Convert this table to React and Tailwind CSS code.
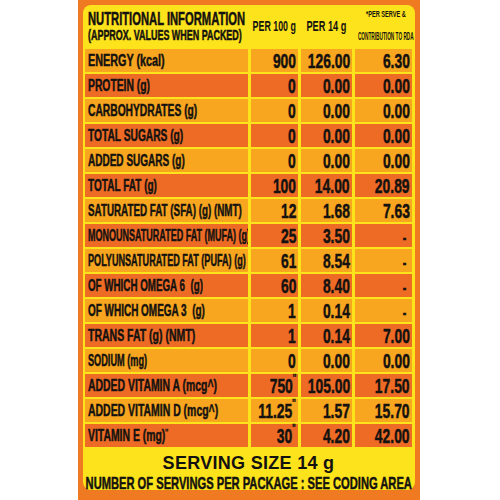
import React, { useLayoutEffect, useRef, useState } from 'react';

// w = width the text takes in the reference (label cells start at x=88)
const rows = [
    { label: 'ENERGY (kcal)', w: 77, a: '900', b: '126.00', c: '6.30' },
    { label: 'PROTEIN (g)', w: 62, a: '0', b: '0.00', c: '0.00' },
    { label: 'CARBOHYDRATES (g)', w: 109, a: '0', b: '0.00', c: '0.00' },
    { label: 'TOTAL SUGARS (g)', w: 95, a: '0', b: '0.00', c: '0.00' },
    { label: 'ADDED SUGARS (g)', w: 97, a: '0', b: '0.00', c: '0.00' },
    { label: 'TOTAL FAT (g)', w: 69, a: '100', b: '14.00', c: '20.89' },
    { label: 'SATURATED FAT (SFA) (g) (NMT)', w: 154, a: '12', b: '1.68', c: '7.63' },
    { label: 'MONOUNSATURATED FAT (MUFA) (g)', w: 162, a: '25', b: '3.50', c: '-' },
    { label: 'POLYUNSATURATED FAT (PUFA) (g)', w: 158, a: '61', b: '8.54', c: '-' },
    { label: 'OF WHICH OMEGA 6  (g)', w: 115, a: '60', b: '8.40', c: '-' },
    { label: 'OF WHICH OMEGA 3  (g)', w: 117, a: '1', b: '0.14', c: '-' },
    { label: 'TRANS FAT (g) (NMT)', w: 107, a: '1', b: '0.14', c: '7.00' },
    { label: 'SODIUM (mg)', w: 59, a: '0', b: '0.00', c: '0.00' },
    { label: 'ADDED VITAMIN A (mcg^)', w: 129, a: '750', sup: true, b: '105.00', c: '17.50' },
    { label: 'ADDED VITAMIN D (mcg^)', w: 130, a: '11.25', sup: true, b: '1.57', c: '15.70' },
    { label: 'VITAMIN E (mg)', w: 80, labelSup: true, a: '30', sup: true, b: '4.20', c: '42.00' },
];

const font = "font-['Liberation_Sans',Arial,sans-serif] font-bold text-[#141210]";
const heavy = '[-webkit-text-stroke:0.5px_#141210]';

// squeeze a line of text to the width it has in the label
function Fit({ w, origin = 'left', className = '', children }) {
    const ref = useRef(null);
    const [s, setS] = useState(0.65);
    useLayoutEffect(() => {
        const n = ref.current.offsetWidth;
        if (n) setS(w / n);
    }, [w]);
    return (
        <span ref={ref} className={`inline-block shrink-0 whitespace-pre ${className}`} style={{ transform: `scaleX(${s})`, transformOrigin: origin }}>
            {children}
        </span>
    );
}

function Num({ value, sup, bg }) {
    return (
        <div className={`${bg} h-[23px] flex items-center justify-end pr-[2px]`}>
            <span className={`inline-block origin-right scale-x-[0.66] whitespace-nowrap text-[21px] leading-none ${heavy}`}>
                {value === '-' ? <span className="text-[16px] pr-[6px]">-</span> : value}
                {sup && <span className="text-[11px] align-top relative -top-[2px]">''</span>}
            </span>
        </div>
    );
}

export default function App() {
    return (
        <div className={`w-[500px] h-[500px] bg-white pl-[78px] ${font}`}>
            <div className="w-[342px] h-[500px] bg-[#ef7a22] px-[5px] pt-[5px] pb-[10px]">
                <div className="h-full bg-[#fde31b] rounded-[8px] pl-[2px] pr-[3px] flex flex-col">
                    <div className="grid grid-cols-[163px_47px_51px_57px] gap-x-[3px] gap-y-[2px]">
                        <div className={`h-[42px] flex flex-col justify-center items-start pl-[3px] ${heavy}`}>
                            <Fit w={157} className="text-[18px] leading-[18px]">NUTRITIONAL INFORMATION</Fit>
                            <Fit w={154} className="text-[14px] leading-[14px]">(APPROX. VALUES WHEN PACKED)</Fit>
                        </div>
                        <div className="h-[42px] flex items-center justify-center">
                            <Fit w={43} origin="center" className="text-[14px] leading-none">PER 100 g</Fit>
                        </div>
                        <div className="h-[42px] flex items-center justify-center">
                            <Fit w={40} origin="center" className="text-[14px] leading-none">PER 14 g</Fit>
                        </div>
                        <div className="h-[42px] flex flex-col items-center justify-center gap-[13px] pl-[4px] pb-[1px]">
                            <Fit w={40} origin="center" className="text-[9px] leading-none">*PER SERVE &amp;</Fit>
                            <Fit w={56} origin="center" className="text-[10px] leading-none">CONTRIBUTION TO RDA</Fit>
                        </div>

                        {rows.map((r, i) => {
                            const bg = i % 2 === 0 ? 'bg-[#f8a51f]' : 'bg-[#ee6b26]';
                            return (
                                <React.Fragment key={r.label}>
                                    <div className={`${bg} h-[23px] flex items-center pl-[3px] overflow-hidden ${heavy}`}>
                                        <Fit w={r.w} className="text-[16px] leading-none">
                                            {r.label}
                                            {r.labelSup && <span className="text-[9px] align-top">''</span>}
                                        </Fit>
                                    </div>
                                    <Num value={r.a} sup={r.sup} bg={bg} />
                                    <Num value={r.b} bg={bg} />
                                    <Num value={r.c} bg={bg} />
                                </React.Fragment>
                            );
                        })}
                    </div>
                    <div className="flex-1 flex flex-col items-center pt-[7px] gap-[4px]">
                        <span className="whitespace-nowrap text-[18px] leading-[18px] tracking-[0.3px]">SERVING SIZE 14 g</span>
                        <div className={`w-full flex justify-center ${heavy}`}>
                            <Fit w={326} origin="center" className="text-[17px] leading-[16px]">NUMBER OF SERVINGS PER PACKAGE : SEE CODING AREA</Fit>
                        </div>
                    </div>
                </div>
            </div>
        </div>
    );
}
